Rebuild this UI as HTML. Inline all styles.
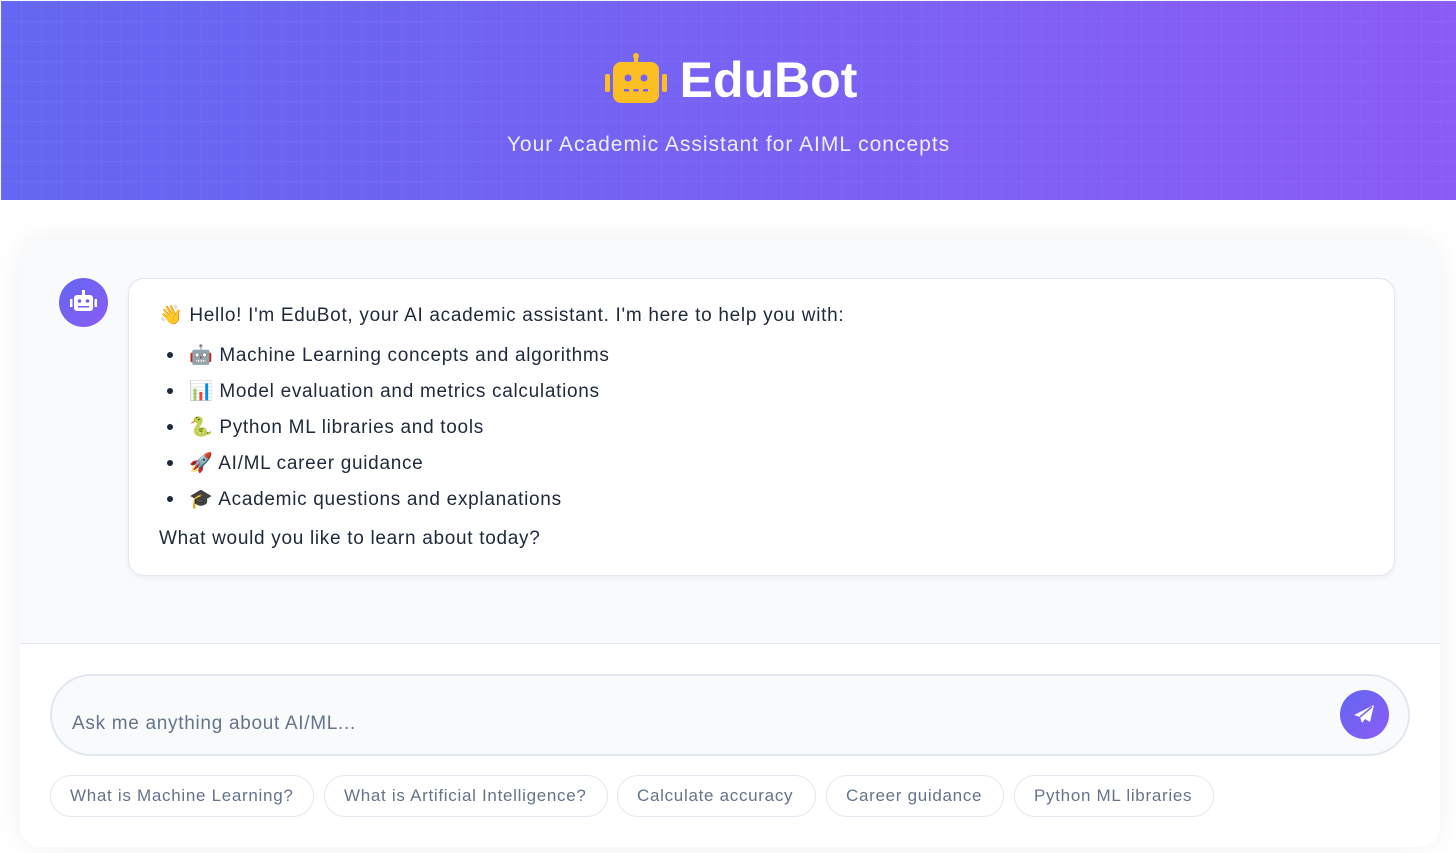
<!DOCTYPE html>
<html><head><meta charset="utf-8"><style>
*{box-sizing:border-box;margin:0;padding:0}
body{width:1456px;height:853px;overflow:hidden;background:#f3f4f6;font-family:"Liberation Sans",Arial,sans-serif;position:relative}
.hdr{position:absolute;left:1px;top:1px;width:1455px;height:199px;background-image:linear-gradient(rgba(255,255,255,.04) 1px,transparent 1px),linear-gradient(90deg,rgba(255,255,255,.04) 1px,transparent 1px),linear-gradient(90deg,#6467f1,#8b5cf6);background-size:20px 20px,20px 20px,100% 100%}
.title{position:absolute;left:0;width:100%;top:50px;text-align:center;color:#fff;font-size:50px;font-weight:bold}
.sub{position:absolute;left:0;width:100%;top:132px;text-align:center;color:#eef;font-size:21px;letter-spacing:1px}
.white{position:absolute;left:0;top:200px;width:1456px;height:653px;background:#fff}
.card{position:absolute;left:20px;top:240px;width:1420px;height:607px;border-radius:20px;background:#fff;box-shadow:0 0 30px rgba(0,0,0,.06);overflow:hidden}
.chat{position:absolute;left:0;top:0;width:1420px;height:404px;background:#f8fafc;border-bottom:1px solid #e2e8f0}
.av{position:absolute;left:39px;top:38px;width:49px;height:49px;border-radius:50%;background:linear-gradient(135deg,#6366f1,#8b5cf6)}
.msg{position:absolute;left:108px;top:38px;width:1267px;height:298px;background:#fff;border:1px solid #e2e8f0;border-radius:16px;color:#1e293b;font-size:19px;letter-spacing:0.7px;box-shadow:0 2px 6px rgba(0,0,0,.05)}
.msg p{position:absolute;left:30px}
.msg li{position:absolute;left:42px;list-style:none}
.msg li:before{content:"";position:absolute;left:-4px;top:9px;width:6px;height:6px;border-radius:50%;background:#1e293b}
.msg li span{margin-left:18px}
.inp{position:absolute;left:30px;top:434px;width:1360px;height:82px;border:2px solid #e2e8f0;border-radius:41px;background:#f8fafc;color:#64748b;font-size:19px;letter-spacing:0.7px;padding:37px 0 0 20px}
.send{position:absolute;right:19px;top:14px;width:49px;height:49px;border-radius:50%;background:linear-gradient(135deg,#6366f1,#8b5cf6)}
.chip{position:absolute;top:535px;height:42px;border:1px solid #e2e8f0;border-radius:21px;color:#64748b;font-size:17px;letter-spacing:0.7px;line-height:40px;padding-left:19px;background:#fff;white-space:nowrap}
</style></head><body>
<div class="hdr">
<svg style="position:absolute;left:603px;top:52px" width="64" height="50" viewBox="0 0 64 50"><rect x="30" y="0" width="4" height="10" rx="2" fill="#fbbf24"/><circle cx="32" cy="3" r="3" fill="#fbbf24"/><rect x="9" y="9" width="46" height="41" rx="8" fill="#fbbf24"/><rect x="1" y="21" width="5" height="18" rx="2" fill="#fbbf24"/><rect x="58" y="21" width="5" height="18" rx="2" fill="#fbbf24"/><circle cx="24" cy="25" r="3.5" fill="#7461f2"/><circle cx="40" cy="25" r="3.5" fill="#7461f2"/><rect x="20" y="36" width="5" height="2.5" fill="#7461f2"/><rect x="29.5" y="36" width="5" height="2.5" fill="#7461f2"/><rect x="39" y="36" width="5" height="2.5" fill="#7461f2"/></svg>
<div class="title"><span style="margin-left:80px">EduBot</span></div>
<div class="sub">Your Academic Assistant for AIML concepts</div>
</div>
<div class="white"></div>
<div class="card">
<div class="chat">
<div class="av"><svg width="49" height="49" viewBox="0 0 49 49"><rect x="23" y="12" width="3" height="6" fill="#fff"/><rect x="15" y="17" width="19" height="16" rx="3" fill="#fff"/><rect x="11" y="21" width="2.5" height="8" fill="#fff"/><rect x="35.5" y="21" width="2.5" height="8" fill="#fff"/><circle cx="20.5" cy="23" r="1.8" fill="#7461f2"/><circle cx="28.5" cy="23" r="1.8" fill="#7461f2"/><rect x="19" y="28" width="11" height="1.5" fill="#7461f2"/></svg></div>
<div class="msg">
<p style="top:24px">👋 Hello! I'm EduBot, your AI academic assistant. I'm here to help you with:</p>
<ul>
<li style="top:64px"><span>🤖 Machine Learning concepts and algorithms</span></li>
<li style="top:100px"><span>📊 Model evaluation and metrics calculations</span></li>
<li style="top:136px"><span>🐍 Python ML libraries and tools</span></li>
<li style="top:172px"><span>🚀 AI/ML career guidance</span></li>
<li style="top:208px"><span>🎓 Academic questions and explanations</span></li>
</ul>
<p style="top:249px">What would you like to learn about today?</p>
</div>
</div>
<div class="inp">Ask me anything about AI/ML...
<div class="send"><svg width="49" height="49" viewBox="0 0 49 49"><path d="M34 15 L14 25 L20 27 L22 33 L25 29 L30 32 Z" fill="#fff"/><path d="M20 27 L32 17" stroke="#7b62f3" stroke-width="1.5"/></svg></div>
</div>
<div class="chip" style="left:30px;width:264px">What is Machine Learning?</div>
<div class="chip" style="left:304px;width:284px">What is Artificial Intelligence?</div>
<div class="chip" style="left:597px;width:199px">Calculate accuracy</div>
<div class="chip" style="left:806px;width:178px">Career guidance</div>
<div class="chip" style="left:994px;width:200px">Python ML libraries</div>
</div>
</body></html>
